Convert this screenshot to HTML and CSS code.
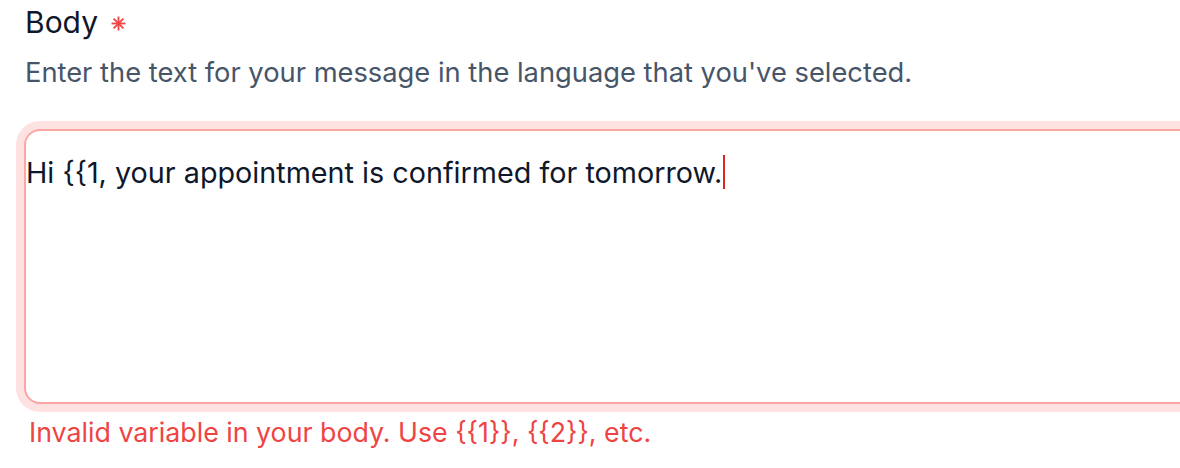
FILE: index.html
```html
<!DOCTYPE html>
<html lang="en">
  <head>
    <meta charset="UTF-8" />
    <meta name="viewport" content="width=device-width, initial-scale=1.0" />
    <title>Message Body</title>
    <link rel="stylesheet" href="styles.css">
  </head>
  <body>
    <div class="field">
      <!-- Label with required marker -->
      <label class="field-label" for="body">
        Body
        <svg class="required" viewBox="0 0 14 14" width="15" height="15" aria-hidden="true">
          <line x1="7" y1="0.5" x2="7" y2="13.5" />
          <line x1="0.5" y1="7" x2="13.5" y2="7" />
          <line x1="2.4" y1="2.4" x2="11.6" y2="11.6" />
          <line x1="2.4" y1="11.6" x2="11.6" y2="2.4" />
        </svg>
      </label>
      <p class="field-help">Enter the text for your message in the language that you've selected.</p>

      <!-- Textarea in error state -->
      <div class="input-ring">
        <div id="body" class="input-box" role="textbox" aria-multiline="true">Hi {{1, your appointment is confirmed for tomorrow.<span class="caret"></span></div>
      </div>

      <p class="field-error">Invalid variable in your body. Use {{1}}, {{2}}, etc.</p>
    </div>
  </body>
</html>
```

FILE: styles.css
```css
body {
  font-family: Inter, "Noto Sans", sans-serif;
  margin: 0;
  background-color: #ffffff;
  overflow: hidden;
}

.field {
  width: 1220px;
}

.field-label {
  display: flex;
  align-items: center;
  gap: 13px;
  padding-left: 25px;
  font-size: 30px;
  line-height: 44px;
  color: #0f172a;
}

.required {
  stroke: #ef4444;
  stroke-width: 1.7;
  margin-top: 2px;
}

.field-help {
  margin: 11px 0 0 25px;
  font-size: 27.3px;
  line-height: 36px;
  color: #475569;
}

.input-ring {
  margin: 30px 0 0 16px;
  padding: 8px;
  border-radius: 24px;
  background-color: #fee2e2;
}

.input-box {
  box-sizing: border-box;
  height: 275px;
  padding: 24px 0 0 0;
  border: 2px solid #fca5a5;
  border-radius: 16px;
  background-color: #ffffff;
  font-size: 28.75px;
  line-height: 36px;
  color: #0f172a;
}

.caret {
  display: inline-block;
  width: 2px;
  height: 34px;
  margin-left: 1px;
  vertical-align: -6px;
  background-color: #dc2626;
}

.field-error {
  margin: 2px 0 0 29px;
  font-size: 26.75px;
  line-height: 36px;
  color: #ef4444;
}
```
